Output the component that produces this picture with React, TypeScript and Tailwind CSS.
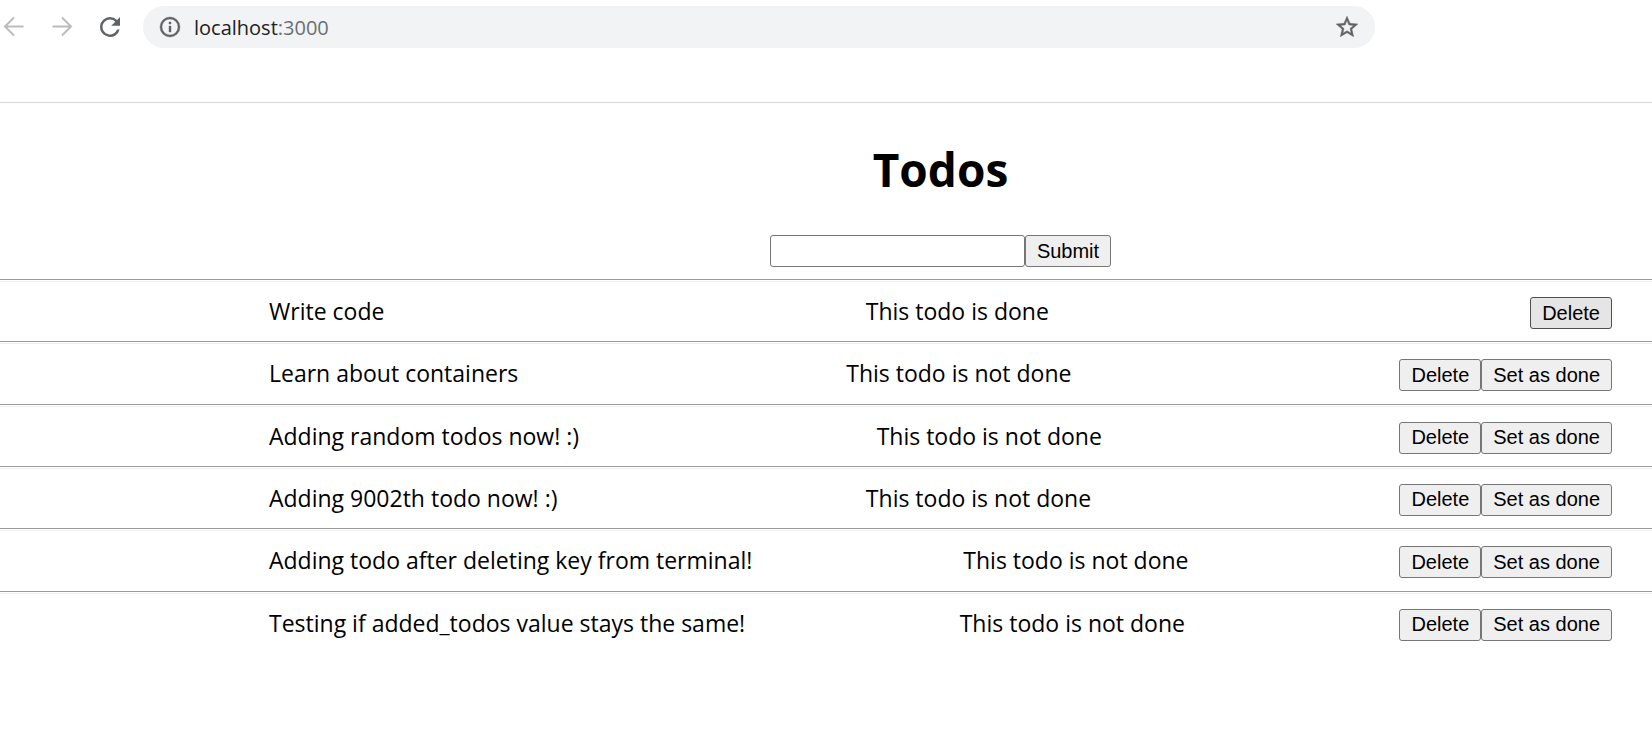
type Todo = { title: string; done: boolean };

const todos: Todo[] = [
  { title: "Write code", done: true },
  { title: "Learn about containers", done: false },
  { title: "Adding random todos now! :)", done: false },
  { title: "Adding 9002th todo now! :)", done: false },
  { title: "Adding todo after deleting key from terminal!", done: false },
  { title: "Testing if added_todos value stays the same!", done: false },
];

const buttonBase =
  "h-8 rounded-[3px] border px-[11px] pb-px font-['Liberation_Sans',Arial,sans-serif] text-[20px] leading-[28px] text-black";

function BrowserBar() {
  return (
    <header className="flex h-[103px] items-start border-b border-[#d5d7d9] pt-[6px]">
      <div className="flex h-[42px] w-[143px] shrink-0 items-center">
        <button aria-label="Back" className="flex w-[28px] shrink-0 justify-center text-[#babcbe]">
          <svg width="28" height="28" viewBox="0 0 28 28" fill="none" stroke="currentColor" strokeWidth="2">
            <path d="M23.5 13.5H5M14 4.5L5 13.5L14 22.5" />
          </svg>
        </button>
        <button aria-label="Forward" className="ml-5 flex w-[28px] shrink-0 justify-center text-[#babcbe]">
          <svg width="28" height="28" viewBox="0 0 28 28" fill="none" stroke="currentColor" strokeWidth="2">
            <path d="M4.5 13.5H23M14 4.5L23 13.5L14 22.5" />
          </svg>
        </button>
        <button aria-label="Reload" className="ml-5 flex w-[28px] shrink-0 justify-center text-[#5f6368]">
          <svg width="30" height="30" viewBox="0 0 24 24" fill="currentColor" className="shrink-0">
            <path d="M17.65 6.35A7.958 7.958 0 0 0 12 4a8 8 0 1 0 7.73 10h-2.08A6 6 0 1 1 12 6c1.66 0 3.14.69 4.22 1.78L13 11h7V4l-2.35 2.35z" />
          </svg>
        </button>
      </div>
      <div className="mr-[277px] flex h-[42px] flex-1 items-center rounded-full bg-[#f1f3f4] pr-[15px] pl-[15px]">
        <svg
          width="24"
          height="24"
          viewBox="0 0 24 24"
          fill="currentColor"
          stroke="currentColor"
          strokeWidth="0.4"
          className="shrink-0 text-[#5f6368]"
        >
          <path d="M11 7h2v2h-2zm0 4h2v6h-2zm1-9a10 10 0 1 0 0 20 10 10 0 0 0 0-20zm0 18a8 8 0 1 1 0-16 8 8 0 0 1 0 16z" />
        </svg>
        <span className="ml-3 flex-1 pt-px text-[20px] leading-[28px] text-[#202124]">
          localhost<span className="text-[#6b6f74]">:3000</span>
        </span>
        <button aria-label="Bookmark this tab" className="text-[#5f6368]">
          <svg width="26" height="26" viewBox="0 0 24 24" fill="currentColor" stroke="currentColor" strokeWidth="0.4">
            <path d="M22 9.24l-7.19-.62L12 2 9.19 8.63 2 9.24l5.46 4.73L5.82 21 12 17.27 18.18 21l-1.63-7.03L22 9.24zM12 15.4l-3.76 2.27 1-4.28-3.32-2.88 4.38-.38L12 6.1l1.71 4.04 4.38.38-3.32 2.88 1 4.28L12 15.4z" />
          </svg>
        </button>
      </div>
    </header>
  );
}

function TodoRow({ todo }: { todo: Todo }) {
  return (
    <li>
      <hr className="h-[3px] border-t border-b border-t-[#9a9a9a] border-b-[#eeeeee]" />
      <div className="flex items-start justify-between pt-[15px] pr-10 pl-[269px]">
        <span className="text-[23px] leading-[28px]">{todo.title}</span>
        <span className="text-[23px] leading-[28px]">{todo.done ? "This todo is done" : "This todo is not done"}</span>
        <div className="flex">
          <button className={`${buttonBase} ${todo.done ? "border-[#4f4f4f] bg-[#e5e5e5]" : "border-[#767676] bg-[#efefef]"}`}>
            Delete
          </button>
          {!todo.done && <button className={`${buttonBase} border-[#767676] bg-[#efefef]`}>Set as done</button>}
        </div>
      </div>
    </li>
  );
}

export default function App() {
  return (
    <div className="min-h-screen bg-white font-['Open_Sans',sans-serif] text-black">
      <BrowserBar />
      <main>
        <div className="flex flex-col items-center pt-[34px] pr-10 pb-3 pl-[269px]">
          <h1 className="text-[46px] leading-[64px] font-bold">Todos</h1>
          <form className="mt-[34px] flex" onSubmit={(e) => e.preventDefault()}>
            <input
              aria-label="New todo"
              className="h-8 w-[255px] rounded-[3px] border border-[#767676] bg-white px-1 font-['Liberation_Sans',Arial,sans-serif] text-[20px] outline-none"
            />
            <button className={`${buttonBase} border-[#767676] bg-[#efefef]`}>Submit</button>
          </form>
        </div>
        <ul className="grid min-h-[374px] auto-rows-fr">
          {todos.map((todo) => (
            <TodoRow key={todo.title} todo={todo} />
          ))}
        </ul>
      </main>
    </div>
  );
}
